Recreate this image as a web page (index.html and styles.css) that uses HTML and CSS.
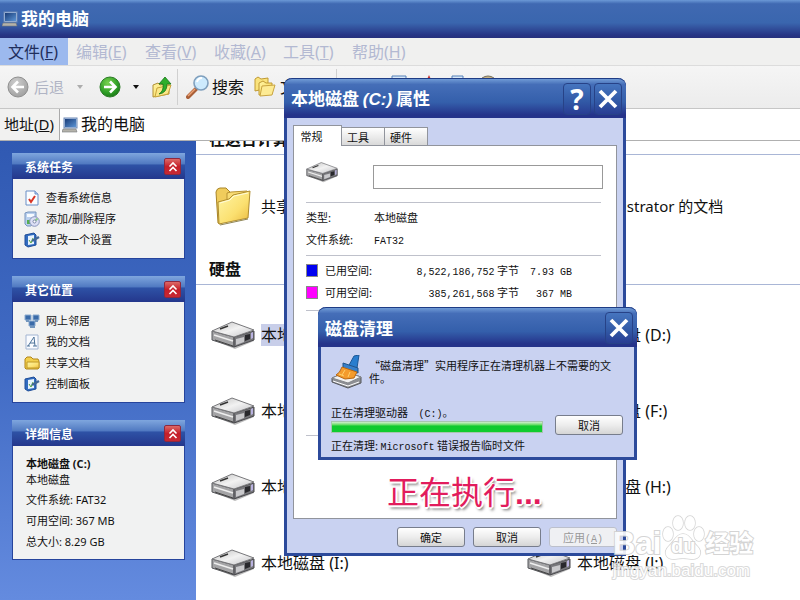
FILE: index.html
```html
<!DOCTYPE html>
<html lang="zh-CN">
<head>
<meta charset="utf-8">
<title>我的电脑</title>
<link rel="stylesheet" href="styles.css">
</head>
<body>
<svg class="defs" aria-hidden="true">
  <defs>
    <linearGradient id="gFolder" x1="0" y1="0" x2="1" y2="1"><stop offset="0" stop-color="#fff6a8"/><stop offset=".6" stop-color="#fbe070"/><stop offset="1" stop-color="#e9b83c"/></linearGradient>
    <linearGradient id="gTop" x1="0" y1="0" x2="1" y2="1"><stop offset="0" stop-color="#bdbdbd"/><stop offset=".5" stop-color="#f2f2f2"/><stop offset="1" stop-color="#c4c4c8"/></linearGradient>
    <radialGradient id="gGreen" cx=".4" cy=".3" r=".8"><stop offset="0" stop-color="#7ad24f"/><stop offset=".6" stop-color="#2f9f26"/><stop offset="1" stop-color="#176f14"/></radialGradient>
    <radialGradient id="gGray" cx=".4" cy=".3" r=".8"><stop offset="0" stop-color="#cfcfcf"/><stop offset="1" stop-color="#9b9b9b"/></radialGradient>
    <linearGradient id="gScreen" x1="0" y1="0" x2="1" y2="1"><stop offset="0" stop-color="#193c78"/><stop offset="1" stop-color="#5c94d4"/></linearGradient>
    <symbol id="drive" viewBox="0 0 44 28">
      <path d="M2 19l22 9 19-8-2-2-17 7L2 16z" fill="#777" opacity=".5"/>
      <path d="M1 10v9l22 7v-10z" fill="#a4a4a6" stroke="#55565a"/>
      <path d="M23 16v10l20-7v-9z" fill="#77777b" stroke="#4a4a4e"/>
      <path d="M1 10L21 1l22 8-20 7z" fill="url(#gTop)" stroke="#77777a"/>
      <path d="M3 14l19 6" stroke="#eee" stroke-width="1.5"/><path d="M4 19l18 6" stroke="#444"/>
      <path d="M25 18l8-2v5l-8 3z" fill="#c9c9cc"/><path d="M34 14l5-1v5l-5 2z" fill="#28282c"/><path d="M40 12l2-1v6l-2 1z" fill="#b9b2e0"/>
      <path d="M9 8l8-3" stroke="#333" stroke-width="1.5"/>
    </symbol>
    <symbol id="folder" viewBox="0 0 36 40">
      <path d="M3 37L1 6q1-4 4-4h6l4 4v10L5 38z" fill="#f0cc5c" stroke="#a98527"/>
      <path d="M12 15V7l4-1 16-1 2 2-1 8z" fill="#f8dc74" stroke="#b89232"/>
      <path d="M4 38L3 16l11-3 4-4 17-4-2 27z" fill="url(#gFolder)" stroke="#b08d2f"/>
      <path d="M5 17l10-3 4-4 14-3" fill="none" stroke="#fffbd8"/><path d="M5 39l28-6" stroke="#8f8555"/>
    </symbol>
    <symbol id="sfolder" viewBox="0 0 16 16">
      <path d="M1 13V4l2-2h4l2 2h5l1 2v7l-1 1H2z" fill="#f2cf4d" stroke="#b18518"/><path d="M3 13V7h12v6z" fill="url(#gFolder)" stroke="#c09826"/>
    </symbol>
    <symbol id="pc" viewBox="0 0 16 16">
      <rect x="2" y="1" width="13" height="10" fill="#b8cdea" stroke="#6c88b4"/><rect x="3" y="2" width="11" height="8" fill="url(#gScreen)"/>
      <path d="M1 12h13l1 3H0z" fill="#b4b2aa" stroke="#77787c" stroke-width=".6"/>
    </symbol>
    <symbol id="info" viewBox="0 0 16 16"><path d="M2 1h9l3 3v11H2z" fill="#fbfdff" stroke="#6a8fc6"/><path d="M11 1v3h3" fill="#b4cdf0" stroke="#6a8fc6"/><path d="M5 9l2 3 4-6" fill="none" stroke="#d93525" stroke-width="2"/></symbol>
    <symbol id="addrm" viewBox="0 0 16 16"><path d="M1 2l3-1h8v8l-5 6H3l-2-2z" fill="#b9d0ee" stroke="#7694bd"/><path d="M3 3h7v3H3z" fill="#f6faff"/><path d="M3 9h4v4H3z" fill="#55ae50"/><circle cx="10.500" cy="10.500" r="4.800" fill="#dcdff6" stroke="#8793bb"/><path d="M10.500 10.500l3-3" stroke="#8ccc87" stroke-width="2"/><circle cx="10.500" cy="10.500" r="1.500" fill="#fff" stroke="#7b87a8"/></symbol>
    <symbol id="panel" viewBox="0 0 16 16"><path d="M1 3l9-2 2 2v10l-8 2-3-2z" fill="#316cc0" stroke="#1e4d99"/><path d="M4 4l6-1v9l-6 1z" fill="#e7f2fc"/><path d="M5 8l2 3 2-5" stroke="#51a243" fill="none"/><path d="M8 9l7-4" stroke="#426796" stroke-width="2.500"/></symbol>
    <symbol id="net" viewBox="0 0 16 16"><path d="M1 2h6v5H1zM9 2h6v5H9zM5 8h6v5H5z" fill="#3a6ba9" stroke="#8cacd0"/><path d="M2 8h3M11 8h3M6 14h5" stroke="#7396bd" stroke-width="2"/></symbol>
    <symbol id="doc" viewBox="0 0 16 16"><path d="M2 1h12v14H2z" fill="#f9fbff" stroke="#a2b5d2"/><path d="M4 12L10 3l1 9M6 9h5M3 12h3M9 12h4" fill="none" stroke="#4c7298"/></symbol>
    <symbol id="chev" viewBox="0 0 16 16"><path d="M4.500 7.500L8 4l3.500 3.500M4.500 12L8 8.500l3.500 3.500" fill="none" stroke="#fff" stroke-width="1.600"/></symbol>
    <symbol id="cross" viewBox="0 0 20 20"><path d="M2 2l16 16M18 2L2 18" stroke="#fff" stroke-width="3.800"/></symbol>
  </defs>
</svg>

<div class="explorer">
  <header class="titlebar"><svg class="i16"><use href="#pc"/></svg><h1>我的电脑</h1></header>
  <nav class="menubar">
    <button class="active">文件(<u>F</u>)</button><button>编辑(<u>E</u>)</button><button>查看(<u>V</u>)</button><button>收藏(<u>A</u>)</button><button>工具(<u>T</u>)</button><button>帮助(<u>H</u>)</button>
  </nav>
  <div class="toolbar">
    <button class="back" disabled>
      <svg class="i22" viewBox="0 0 22 22"><circle cx="11" cy="11" r="10" fill="url(#gGray)" stroke="#8f8f8f"/><path d="M17 11H6M11 5.500L5.500 11l5.500 5.500" fill="none" stroke="#fff" stroke-width="2.600"/></svg>
      <span>后退</span><i class="caret"></i>
    </button>
    <button class="fwd" aria-label="前进">
      <svg class="i22" viewBox="0 0 22 22"><circle cx="11" cy="11" r="10" fill="url(#gGreen)" stroke="#2c7c27"/><path d="M5 11h11M11 5.500l5.500 5.500-5.500 5.500" fill="none" stroke="#fff" stroke-width="2.600"/></svg>
      <i class="caret"></i>
    </button>
    <button class="up" aria-label="向上">
      <svg class="i22" viewBox="0 0 22 22"><path d="M2 21V9l5-2 2 2 9-2v11z" fill="url(#gFolder)" stroke="#b08f35"/><path d="M4 21l2-9 14-3-3 9z" fill="#fbe788" stroke="#c8a53c"/><path d="M8 18q5-3 4-10H8l6-7 6 7h-4q0 9-8 10z" fill="#2fae2b" stroke="#157516" stroke-width=".8"/></svg>
    </button>
    <button class="search">
      <svg class="i24" viewBox="0 0 24 24"><path d="M2 22l8-8" stroke="#a95f38" stroke-width="4" stroke-linecap="round"/><path d="M2 21l7-7" stroke="#eca173" stroke-width="1.500"/><circle cx="15" cy="8" r="7" fill="#cdeafd" stroke="#7f9fbd" stroke-width="1.600"/><path d="M11 7q1-4 5-4" fill="none" stroke="#fff" stroke-width="2"/></svg>
      <span>搜索</span>
    </button>
    <button class="folders">
      <svg class="i22" viewBox="0 0 22 22"><path d="M1 15V3l3-2 3 2 7-1v10z" fill="#fae37c" stroke="#c09a33"/><path d="M5 19V7l4-2 3 2h6v10z" fill="url(#gFolder)" stroke="#c09a33"/><path d="M6 20l2-10 13-1-3 10z" fill="#fdeb94" stroke="#c9a440"/></svg>
      <span>文件夹</span>
    </button>
    <div class="extras">
      <button aria-label="查看方式"><svg class="i24" viewBox="0 0 24 24"><path d="M5 1h14v22H5z" fill="#d8e8f8" stroke="#5580b8"/></svg></button>
      <button aria-label="删除"><svg class="i24" viewBox="0 0 24 24"><path d="M12 0l5 11-5 12-5-12z" fill="#c83434"/></svg></button>
      <button aria-label="复制"><svg class="i24" viewBox="0 0 24 24"><path d="M5 1h11v22H5z" fill="#d8e8f8" stroke="#5580b8"/></svg></button>
      <button aria-label="粘贴"><svg class="i24" viewBox="0 0 24 24"><path d="M5 3q6-4 12 0v20H5z" fill="#c6b285" stroke="#77705e"/></svg></button>
    </div>
  </div>
  <div class="addressbar">
    <label for="addr">地址(<u>D</u>)</label>
    <div class="field"><svg class="i16"><use href="#pc"/></svg><input id="addr" value="我的电脑"></div>
  </div>

  <div class="content">
    <aside class="sidebar">
      <section class="box">
        <div class="boxhead"><h2>系统任务</h2><button aria-label="折叠系统任务"><svg class="i16"><use href="#chev"/></svg></button></div>
        <div class="links">
          <a href="#"><svg class="i16"><use href="#info"/></svg>查看系统信息</a>
          <a href="#"><svg class="i16"><use href="#addrm"/></svg>添加/删除程序</a>
          <a href="#"><svg class="i16"><use href="#panel"/></svg>更改一个设置</a>
        </div>
      </section>
      <section class="box">
        <div class="boxhead"><h2>其它位置</h2><button aria-label="折叠其它位置"><svg class="i16"><use href="#chev"/></svg></button></div>
        <div class="links">
          <a href="#"><svg class="i16"><use href="#net"/></svg>网上邻居</a>
          <a href="#"><svg class="i16"><use href="#doc"/></svg>我的文档</a>
          <a href="#"><svg class="i16"><use href="#sfolder"/></svg>共享文档</a>
          <a href="#"><svg class="i16"><use href="#panel"/></svg>控制面板</a>
        </div>
      </section>
      <section class="box">
        <div class="boxhead"><h2>详细信息</h2><button aria-label="折叠详细信息"><svg class="i16"><use href="#chev"/></svg></button></div>
        <div class="details">
          <div class="name"><strong>本地磁盘 (C:)</strong><span>本地磁盘</span></div>
          <p>文件系统: FAT32</p><p>可用空间: 367 MB</p><p>总大小: 8.29 GB</p>
        </div>
      </section>
    </aside>
    <main class="files">
      <h2 class="first">在这台计算机上存储的文件</h2>
      <div class="grid folders-grid">
        <div class="item"><svg class="ifolder"><use href="#folder"/></svg><span>共享文档</span></div>
        <div class="item"><svg class="ifolder"><use href="#folder"/></svg><span>Administrator 的文档</span></div>
      </div>
      <h2>硬盘</h2>
      <div class="grid drives">
        <div class="item"><svg class="idrive"><use href="#drive"/></svg><span class="selected">本地磁盘 (C:)</span></div>
        <div class="item"><svg class="idrive"><use href="#drive"/></svg><span>本地磁盘 (D:)</span></div>
        <div class="item"><svg class="idrive"><use href="#drive"/></svg><span>本地磁盘 (E:)</span></div>
        <div class="item"><svg class="idrive"><use href="#drive"/></svg><span>本地磁盘 (F:)</span></div>
        <div class="item"><svg class="idrive"><use href="#drive"/></svg><span>本地磁盘 (G:)</span></div>
        <div class="item"><svg class="idrive"><use href="#drive"/></svg><span>本地磁盘 (H:)</span></div>
        <div class="item"><svg class="idrive"><use href="#drive"/></svg><span>本地磁盘 (I:)</span></div>
        <div class="item"><svg class="idrive"><use href="#drive"/></svg><span>本地磁盘 (J:)</span></div>
      </div>
    </main>
  </div>
</div>

<section class="window props" role="dialog" aria-labelledby="t1">
  <header class="wintitle"><h2 id="t1">本地磁盘 <em>(C:)</em> 属性</h2><div class="winbtns"><button aria-label="帮助"><b>?</b></button><button aria-label="关闭"><svg class="i20"><use href="#cross"/></svg></button></div></header>
  <div class="winbody">
    <div class="tabs" role="tablist"><button role="tab" aria-selected="true" class="on">常规</button><button role="tab">工具</button><button role="tab">硬件</button></div>
    <div class="page">
      <div class="labelrow"><svg class="idrive small"><use href="#drive"/></svg><input aria-label="卷标"></div>
      <dl class="facts"><dt>类型:</dt><dd>本地磁盘</dd><dt>文件系统:</dt><dd><span class="mono">FAT32</span></dd></dl>
      <table class="space">
        <tr><th><i class="sw used"></i>已用空间:</th><td><span class="mono">8,522,186,752</span> 字节</td><td><span class="mono">7.93 GB</span></td></tr>
        <tr><th><i class="sw free"></i>可用空间:</th><td><span class="mono">385,261,568</span> 字节</td><td><span class="mono">367 MB</span></td></tr>
      </table>
      <hr>
      <hr class="lower">
      <p class="running">正在执行<b>...</b></p>
    </div>
    <div class="actions"><button class="btn">确定</button><button class="btn">取消</button><button class="btn" disabled>应用<span class="mono">(<u>A</u>)</span></button></div>
  </div>
</section>

<section class="window clean" role="dialog" aria-labelledby="t2">
  <header class="wintitle"><h2 id="t2">磁盘清理</h2><div class="winbtns"><button aria-label="关闭"><svg class="i20"><use href="#cross"/></svg></button></div></header>
  <div class="winbody">
    <div class="message">
      <svg class="i32" viewBox="0 0 32 34"><path d="M1 23l14-6 15 5v6l-13 5-16-6z" fill="#8d8f94" stroke="#55575b"/><path d="M1 23l14-6 15 5-13 6z" fill="#f1f1f1" stroke="#85878b"/><path d="M2 26l15 5 11-4" fill="none" stroke="#fff"/><path d="M17 12L23 1l5-1-2 13z" fill="#287dce" stroke="#1b5796"/><path d="M12 8l15 5v5l-15-5z" fill="#367fca" stroke="#225489"/><path d="M11 12l15 5-3 6-9 1-9-4q4-2 6-8z" fill="#f49b2c" stroke="#b76612"/><path d="M8 19l5 2M14 15l-3 5M19 17l-2 5" stroke="#ffd06c"/></svg>
      <p>“磁盘清理”实用程序正在清理机器上不需要的文件。</p>
    </div>
    <div class="work">
      <div class="status"><label for="bar">正在清理驱动器 <span class="mono drv">(C:)</span>。</label><progress id="bar" value="100" max="100"></progress></div>
      <button class="btn">取消</button>
    </div>
    <p class="now">正在清理: <span class="mono">Microsoft</span> 错误报告临时文件</p>
  </div>
</section>

<div class="watermark">
  <div class="brand"><span>Bai</span><span class="paw"><svg viewBox="0 0 44 48"><g fill="#fff" stroke="#d0d0d0" stroke-width="1.500"><ellipse cx="7" cy="20" rx="5" ry="7"/><ellipse cx="17" cy="9" rx="5" ry="7"/><ellipse cx="29" cy="9" rx="5" ry="7"/><ellipse cx="38" cy="20" rx="5" ry="7"/><path d="M22 20c7 0 9 8 14 12 7 7 2 14-6 13-6-1-10-1-16 0-8 1-13-6-6-13 5-4 7-12 14-12z"/></g></svg><b>du</b></span><span class="cn">经验</span></div>
  <div class="site">jingyan.baidu.com</div>
</div>
</body>
</html>
```
FILE: styles.css
```css
* { box-sizing: border-box; }
body { margin: 0; min-height: 100vh; font: 11px/16px "Noto Sans", "Noto Sans CJK SC", sans-serif; color: #111; overflow: hidden; }
h1, h2, p, dl, dd { margin: 0; }
button, input { font: inherit; color: inherit; margin: 0; padding: 0; border: 0; background: none; }
svg { flex: none; display: block; }
.defs { position: absolute; width: 0; height: 0; }
.i16 { width: 16px; height: 16px; }
.i20 { width: 20px; height: 20px; }
.i22 { width: 22px; height: 22px; }
.i24 { width: 24px; height: 24px; }
.i32 { width: 32px; height: 34px; }
.mono { font-family: "Liberation Mono", "Noto Sans CJK SC", monospace; font-size: 10px; line-height: 10px; }

.explorer { display: flex; flex-direction: column; height: 100vh; }
.titlebar { display: flex; align-items: center; gap: 3px; height: 38px; flex: none; padding: 0 2px; color: #fff; background: linear-gradient(#6b99d6, #4069b2 10%, #3a66ae 60%, #273585 92%, #26307c); }
.titlebar h1 { font-size: 17px; line-height: 24px; }
.menubar { display: flex; height: 28px; flex: none; background: #f0f0ef; border-bottom: 1px solid #dcdcdc; }
.menubar button { padding: 0 8px; font-size: 16px; line-height: 26px; color: #b3b9d2; white-space: nowrap; width: 69px; text-align: left; }
.menubar .active { background: #9cb9ee; color: #1f2e5c; width: 68px; }
.toolbar { display: flex; align-items: center; height: 43px; flex: none; background: linear-gradient(#f5f5f5, #ececec); border-bottom: 1px solid #c6c6c6; font-size: 16px; line-height: 24px; overflow: hidden; }
.toolbar button { display: flex; align-items: center; white-space: nowrap; }
.toolbar .back { padding-left: 7px; gap: 5px; color: #b0b4c4; }
.back .caret { margin-left: 8px; opacity: .3; }
.toolbar .back span { font-size: 15px; }
.toolbar .fwd { margin-left: 16px; gap: 12px; }
.toolbar .up { margin-left: 12px; }
.toolbar .search { margin-left: 4px; padding-left: 8px; gap: 2px; border-left: 1px solid #d0d0d0; height: 36px; }
.toolbar .folders { margin-left: 10px; gap: 4px; }
.extras { display: flex; align-items: center; gap: 6px; height: 36px; margin-left: 8px; padding-left: 50px; border-left: 1px solid #d0d0d0; }
.caret { border: 3px solid transparent; border-top: 4px solid #111; border-bottom: 0; }
.addressbar { display: flex; height: 32px; flex: none; background: #f1f1f0; font-size: 15px; line-height: 31px; border-bottom: 1px solid #b0b0b0; }
.addressbar label { padding-left: 4px; width: 59px; flex: none; }
.field { display: flex; flex: 1; align-items: center; gap: 3px; background: #fff; border-left: 1px solid #aaa; padding-left: 2px; }
.field input { flex: 1; font-size: 16px; height: 28px; min-width: 0; }

.content { display: flex; flex: 1; min-height: 0; overflow: hidden; }
.sidebar { width: 196px; flex: none; display: flex; flex-direction: column; gap: 17px; padding: 12px; background: linear-gradient(#3059b2, #416bc4 50%, #648bdf); }
.box { width: 173px; border: 1px solid #26449c; background: #f1f2f2; }
.boxhead { display: flex; justify-content: space-between; align-items: center; height: 26px; margin: -1px; padding: 0 4px 0 13px; color: #fff; background: linear-gradient(#7fa6de, #5079c1 42%, #2e52a6 46%, #24378c); }
.boxhead h2 { font-size: 12px; line-height: 18px; padding-top: 3px; }
.boxhead button { width: 17px; height: 17px; background: linear-gradient(#dc6967, #c51e29 50%, #c72833); border: 1px solid #8e283f; border-radius: 2px; display: grid; place-items: center; }
.links { padding: 9px 11px 8px; display: flex; flex-direction: column; }
.links a { display: flex; align-items: center; gap: 6px; line-height: 21px; color: #111; text-decoration: none; white-space: nowrap; }
.details { padding: 11px 13px 7px; line-height: 21px; }
.details .name { display: grid; line-height: 16px; padding-bottom: 1px; }

.files { flex: 1; min-width: 0; background: #fff; }
.files h2 { font-size: 16px; line-height: 24px; height: 28px; padding-left: 13px; border-bottom: 1px solid #a9b6d6; white-space: nowrap; }
.files .first { margin-top: -14px; }
.grid { display: grid; grid-template-columns: repeat(2, 316px); padding-left: 15px; }
.item { display: flex; align-items: center; gap: 6px; white-space: nowrap; }
.folders-grid { font-size: 15px; height: 102px; line-height: 22px; padding-left: 19px; }
.folders-grid .item { gap: 10px; }
.drives { grid-auto-rows: 76px; font-size: 16px; line-height: 22px; padding-top: 12px; }
.idrive { width: 44px; height: 28px; }
.ifolder { width: 36px; height: 40px; }
.selected { background: #c8cee9; }

.window { position: absolute; border: 3px solid #2c4a9b; border-top: 0; border-radius: 8px 8px 0 0; background: #c9d2f1; font-family: "Noto Sans CJK SC", sans-serif; }
.props { left: 284px; top: 78px; width: 342px; }
.clean { left: 318px; top: 307px; width: 319px; }
.wintitle { display: flex; justify-content: space-between; align-items: center; height: 40px; margin: 0 -3px; padding: 0 4px 0 7px; color: #fff; border-top: 1px solid #1e3c85; border-radius: 8px 8px 0 0; background: linear-gradient(#709bd6, #456eb8 14%, #345fab 60%, #25338a 92%); }
.wintitle h2 { font-size: 17px; line-height: 24px; white-space: nowrap; }
.wintitle em { font-family: "Liberation Sans", sans-serif; }
.winbtns { display: flex; gap: 3px; }
.winbtns button { width: 28px; height: 32px; display: grid; place-items: center; border: 1px solid #274287; border-radius: 4px; background: linear-gradient(#4675bf, #3158a5 60%, #293d93); }
.winbtns b { font-size: 28px; line-height: 30px; font-family: "Noto Sans", sans-serif; }
.winbody { padding: 6px; }
.tabs { display: flex; align-items: flex-end; height: 21px; }
.tabs button { width: 44px; height: 18px; border: 1px solid #91949c; border-bottom: 0; background: linear-gradient(#fff, #d9d9d9); line-height: 16px; margin-left: -1px; padding-right: 10px; }
.tabs .on { width: 49px; height: 21px; background: #fff; margin: 0 0 -1px; position: relative; padding-right: 12px; }
.page { border: 1px solid #91949c; background: #fff; min-height: 374px; padding: 16px 13px 0 12px; margin-bottom: 8px; }
.labelrow { display: flex; align-items: center; justify-content: space-between; height: 40px; padding-bottom: 10px; }
.labelrow .small { width: 32px; height: 22px; margin-bottom: 10px; }
.labelrow input { width: 230px; height: 24px; border: 1px solid #999; }
.facts { display: grid; grid-template-columns: 68px 1fr; line-height: 22px; margin-right: 2px; padding: 3px 0 5px; border: solid #bfc1cb; border-width: 1px 0; }
.space { border-collapse: collapse; line-height: 22px; width: 266px; margin: 3px 0 7px; }
.space th, .space td { padding: 0; font-weight: 400; text-align: right; white-space: nowrap; vertical-align: middle; }
.space th { text-align: left; display: flex; align-items: center; gap: 7px; }
.sw { width: 12px; height: 13px; border: 1px solid #888; }
.used { background: #0000f0; }
.free { background: #f0f; }
hr { border: 0; border-top: 1px solid #bfc1cb; margin: 0 2px 0 0; }
.lower { margin-top: 124px; }
.running { font-size: 32px; line-height: 44px; padding: 32px 0 0 81px; color: #e21c5c; text-shadow: 1px 1px #fff, -1px -1px #fff, 2px 0 #fff, -2px 0 #fff, 0 2px #fff, 2px 3px 3px #666; white-space: nowrap; }
.running b { font-family: "Liberation Sans", sans-serif; line-height: 32px; }
.actions { display: flex; justify-content: flex-end; gap: 8px; }
.btn { width: 68px; height: 20px; line-height: 16px; flex: none; border: 1px solid #777d8c; border-radius: 3px; background: linear-gradient(#fff, #ededed 50%, #d5d5d5); white-space: nowrap; }
.btn:disabled { color: #999; border-color: #bcc0cc; background: #eff0f3; }
.clean .winbody { padding: 8px 11px 2px 10px; }
.message { display: flex; gap: 6px; line-height: 13px; height: 49px; padding-right: 8px; }
.message p { padding-top: 4px; }
.work { display: flex; justify-content: space-between; align-items: flex-end; }
.status { display: grid; line-height: 16px; width: 212px; gap: 1px; }
.drv { margin-left: 8px; }
progress { appearance: none; display: block; width: 100%; height: 12px; border: 0; margin-bottom: 2px; }
progress::-webkit-progress-bar { background: #ddd; }
progress::-webkit-progress-value { background: linear-gradient(#d3efcf, #5fdb5f 30%, #10c92e 40%, #10cc30); border: 1px solid #a9c5b0; }
.now { line-height: 20px; white-space: nowrap; }

.watermark { position: absolute; left: 613px; top: 514px; color: #fff; opacity: .9; pointer-events: none; font-family: "Liberation Sans", "Noto Sans CJK SC", sans-serif; paint-order: stroke fill; }
.brand { display: flex; align-items: flex-end; height: 48px; font-weight: 700; font-size: 31px; line-height: 36px; -webkit-text-stroke: 2px #d0d0d0; }
.paw { display: grid; width: 44px; }
.paw > * { grid-area: 1 / 1; }
.paw b { font-size: 20px; line-height: 24px; align-self: end; text-align: center; padding-bottom: 4px; }
.cn { font-size: 24px; }
.site { font-size: 17px; line-height: 18px; -webkit-text-stroke: 2px #d6d6d6; }
```
